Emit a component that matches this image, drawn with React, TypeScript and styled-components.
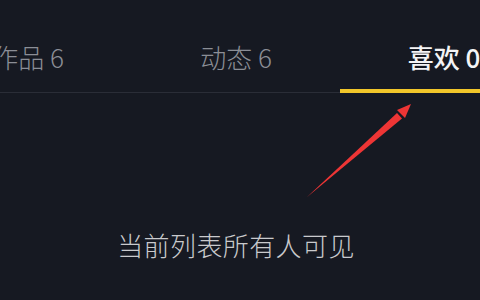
import React from 'react';
import styled, { createGlobalStyle } from 'styled-components';

const GlobalStyle = createGlobalStyle`
  html, body {
    margin: 0;
    padding: 0;
    background: #161922;
  }
  body {
    font-family: 'Noto Sans CJK SC', 'Noto Sans', sans-serif;
  }
`;

const Screen = styled.div`
  position: relative;
  width: 480px;
  height: 300px;
  overflow: hidden;
  background: #161922;
`;

const TabBar = styled.div`
  display: flex;
  height: 92px;
  margin-left: -76px;
  border-bottom: 1px solid #2a2d37;
`;

const Tab = styled.div<{ active?: boolean }>`
  position: relative;
  flex: 0 0 208px;
  box-sizing: border-box;
  padding-top: 20px;
  display: flex;
  align-items: center;
  justify-content: center;
  font-size: 26px;
  font-weight: ${({ active }) => (active ? 500 : 300)};
  color: ${({ active }) => (active ? '#f4f4f6' : '#8b8e96')};
  white-space: nowrap;
`;

const Underline = styled.div`
  position: absolute;
  left: 0;
  right: 0;
  bottom: -1px;
  height: 4px;
  background: #f1c62a;
`;

const Notice = styled.div`
  margin-top: 134px;
  padding-right: 8px;
  text-align: center;
  font-size: 26px;
  font-weight: 300;
  line-height: 36px;
  letter-spacing: 0.4px;
  color: #c9cacd;
`;

const Annotation = styled.svg`
  position: absolute;
  left: 0;
  top: 0;
  pointer-events: none;
`;

const tabs = [
  { label: '作品 6' },
  { label: '动态 6' },
  { label: '喜欢 0', active: true },
];

export default function App() {
  return (
    <Screen>
      <GlobalStyle />
      <TabBar>
        {tabs.map((t) => (
          <Tab key={t.label} active={t.active}>
            {t.label}
            {t.active && <Underline />}
          </Tab>
        ))}
      </TabBar>
      <Notice>当前列表所有人可见</Notice>
      <Annotation width="480" height="300" viewBox="0 0 480 300">
        <polygon points="411,104 397,110 405,118" fill="#ee3535" />
        <polygon points="306.5,197.5 397,113 402,118.5" fill="#ee3535" />
      </Annotation>
    </Screen>
  );
}
